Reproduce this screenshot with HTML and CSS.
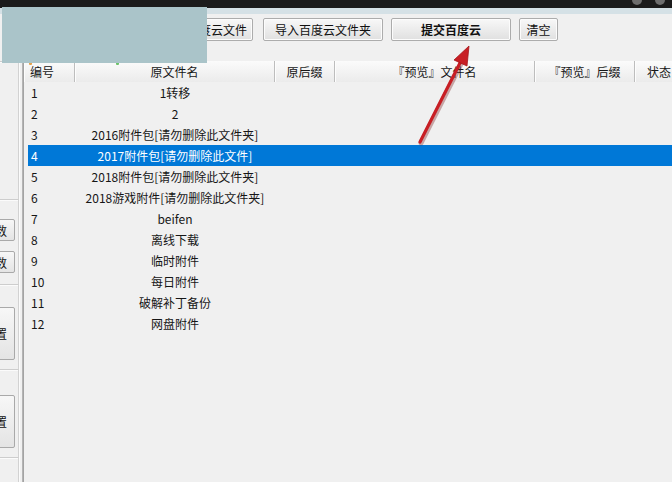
FILE: index.html
```html
<!DOCTYPE html>
<html lang="zh-CN">
<head>
<meta charset="utf-8">
<title>百度云上传</title>
<link rel="stylesheet" href="styles.css">
</head>
<body>
<div class="titlebar"><span class="ctl"></span><span class="ctl"></span></div>
<div class="edge"></div>
<div class="app">
  <aside class="side">
    <div class="grp g0"></div>
    <div class="grp g1"></div>
    <div class="grp g2">
      <button class="sbtn">读取参数</button>
      <button class="sbtn gap">保存参数</button>
    </div>
    <div class="grp g3"><button class="sbtn tall">设置</button></div>
    <div class="grp g4"><button class="sbtn tall">配置</button></div>
    <div class="grp g5"></div>
  </aside>
  <main class="main">
    <div class="toolbar">
      <button class="btn first">批量导入百度云文件</button>
      <button class="btn">导入百度云文件夹</button>
      <button class="btn bold">提交百度云</button>
      <button class="btn small">清空</button>
    </div>
    <div class="grid">
      <div class="head">
        <div class="hc left"><span class="dot orange"></span>编号</div>
        <div class="hc"><span class="dot green"></span>原文件名</div>
        <div class="hc">原后缀</div>
        <div class="hc">『预览』文件名</div>
        <div class="hc">『预览』后缀</div>
        <div class="hc left pad">状态</div>
      </div>
      <div class="rows">
        <div class="row"><span class="num">1</span><span class="name">1转移</span></div>
        <div class="row"><span class="num">2</span><span class="name">2</span></div>
        <div class="row"><span class="num">3</span><span class="name">2016附件包[请勿删除此文件夹]</span></div>
        <div class="row sel"><span class="num">4</span><span class="name">2017附件包[请勿删除此文件]</span></div>
        <div class="row"><span class="num">5</span><span class="name">2018附件包[请勿删除此文件夹]</span></div>
        <div class="row"><span class="num">6</span><span class="name">2018游戏附件[请勿删除此文件夹]</span></div>
        <div class="row"><span class="num">7</span><span class="name">beifen</span></div>
        <div class="row"><span class="num">8</span><span class="name">离线下载</span></div>
        <div class="row"><span class="num">9</span><span class="name">临时附件</span></div>
        <div class="row"><span class="num">10</span><span class="name">每日附件</span></div>
        <div class="row"><span class="num">11</span><span class="name">破解补丁备份</span></div>
        <div class="row"><span class="num">12</span><span class="name">网盘附件</span></div>
      </div>
    </div>
  </main>
</div>
<div class="mask"></div>
<svg class="arrow" width="672" height="482" viewBox="0 0 672 482">
  <line x1="421" y1="143" x2="462" y2="62" stroke="#7a1a1a" stroke-opacity="0.35" stroke-width="5" stroke-linecap="round"/>
  <line x1="420" y1="142" x2="461" y2="61" stroke="#c81e24" stroke-width="3.2" stroke-linecap="round"/>
  <polygon points="469,46 467,66 454,60" fill="#c81e24" stroke="#a51418" stroke-width="0.8"/>
</svg>
</body>
</html>
```

FILE: styles.css
```css
* { box-sizing: border-box; }
html, body { margin: 0; padding: 0; }
body {
  width: 672px;
  height: 482px;
  overflow: hidden;
  position: relative;
  background: #f0f0f0;
  font-family: "Noto Sans CJK SC", "Microsoft YaHei", sans-serif;
  font-size: 12px;
  color: #161616;
}
.titlebar {
  height: 8px;
  background: #1b1b1b;
  display: flex;
  justify-content: flex-end;
  align-items: flex-start;
  gap: 13px;
  padding-right: 7px;
  overflow: hidden;
}
.ctl {
  width: 10px;
  height: 10px;
  margin-top: -5px;
  border-radius: 50%;
  background: #6e6e6e;
}
.edge { height: 6px; background: #d5e1e6; }
.app { display: flex; height: 468px; }

.side {
  width: 23px;
  flex-shrink: 0;
  border-right: 1px solid #b4b4b4;
  display: flex;
  flex-direction: column;
  background: #f0f0f0;
}
.grp {
  border-bottom: 1px solid #cdcdcd;
  border-right: 1px solid #d2d2d2;
  box-shadow: 0 1px 0 #fbfbfb, 1px 0 0 #fbfbfb;
  width: 19px;
  display: flex;
  flex-direction: column;
  align-items: flex-end;
  overflow: hidden;
  padding-right: 3px;
}
.g0 { height: 48px; }
.g1 { height: 138px; }
.g2 { height: 85px; padding-top: 19px; }
.g3 { height: 85px; padding-top: 22px; }
.g4 { height: 88px; padding-top: 25px; }
.g5 { flex: 1; border-bottom: none; }
.sbtn {
  flex-shrink: 0;
  width: 60px;
  height: 22px;
  padding: 0 7px 0 0;
  text-align: right;
  font: inherit;
  color: #111;
  border: 1px solid #a9a9a9;
  border-radius: 2px;
  background: linear-gradient(#f7f7f7, #e4e4e4);
}
.sbtn.gap { margin-top: 10px; }
.sbtn.tall { height: 53px; }

.main { flex: 1; display: flex; flex-direction: column; min-width: 0; }
.toolbar {
  height: 47px;
  padding: 4px 0 0 110px;
  display: flex;
  align-items: flex-start;
  gap: 8px;
}
.btn {
  width: 120px;
  height: 23px;
  padding: 0;
  font: inherit;
  color: #111;
  white-space: nowrap;
  border: 1px solid #acacac;
  border-radius: 2px;
  background: linear-gradient(#f8f8f8, #ececec 50%, #e0e0e0);
  box-shadow: inset 0 0 0 1px #fcfcfc;
}
.btn.first { margin-right: 2px; }
.btn.bold { font-weight: bold; }
.btn.small { width: 39px; }

.grid { flex: 1; border-left: 1px solid #a3a3a3; display: flex; flex-direction: column; }
.head {
  display: grid;
  grid-template-columns: 51px 200px 60px 200px 100px 1fr;
  height: 21px;
  border-bottom: 1px solid #d0d0d0;
}
.hc {
  position: relative;
  border-right: 1px solid #bdbdbd;
  box-shadow: inset 1px 0 0 #fdfdfd;
  background: linear-gradient(#fbfbfb, #ebebeb);
  line-height: 21px;
  text-align: center;
  white-space: nowrap;
}
.hc.left { text-align: left; padding-left: 6px; }
.hc.pad { padding-left: 12px; border-right: none; }
.dot { position: absolute; top: 1px; width: 3px; height: 3px; border-radius: 1px; }
.dot.orange { left: 5px; background: #e4a24a; }
.dot.green { left: 41px; background: #6cc36a; }

.rows { padding-left: 4px; }
.row {
  display: grid;
  grid-template-columns: 47px 200px;
  height: 21px;
  line-height: 21px;
  white-space: nowrap;
}
.row .num { padding-left: 3px; }
.row .name { text-align: center; }
.row.sel { background: #0078d7; color: #fff; }

.mask {
  position: absolute;
  left: 2px;
  top: 7px;
  width: 205px;
  height: 56px;
  background: #aac4c9;
}
.arrow { position: absolute; left: 0; top: 0; pointer-events: none; }
```
